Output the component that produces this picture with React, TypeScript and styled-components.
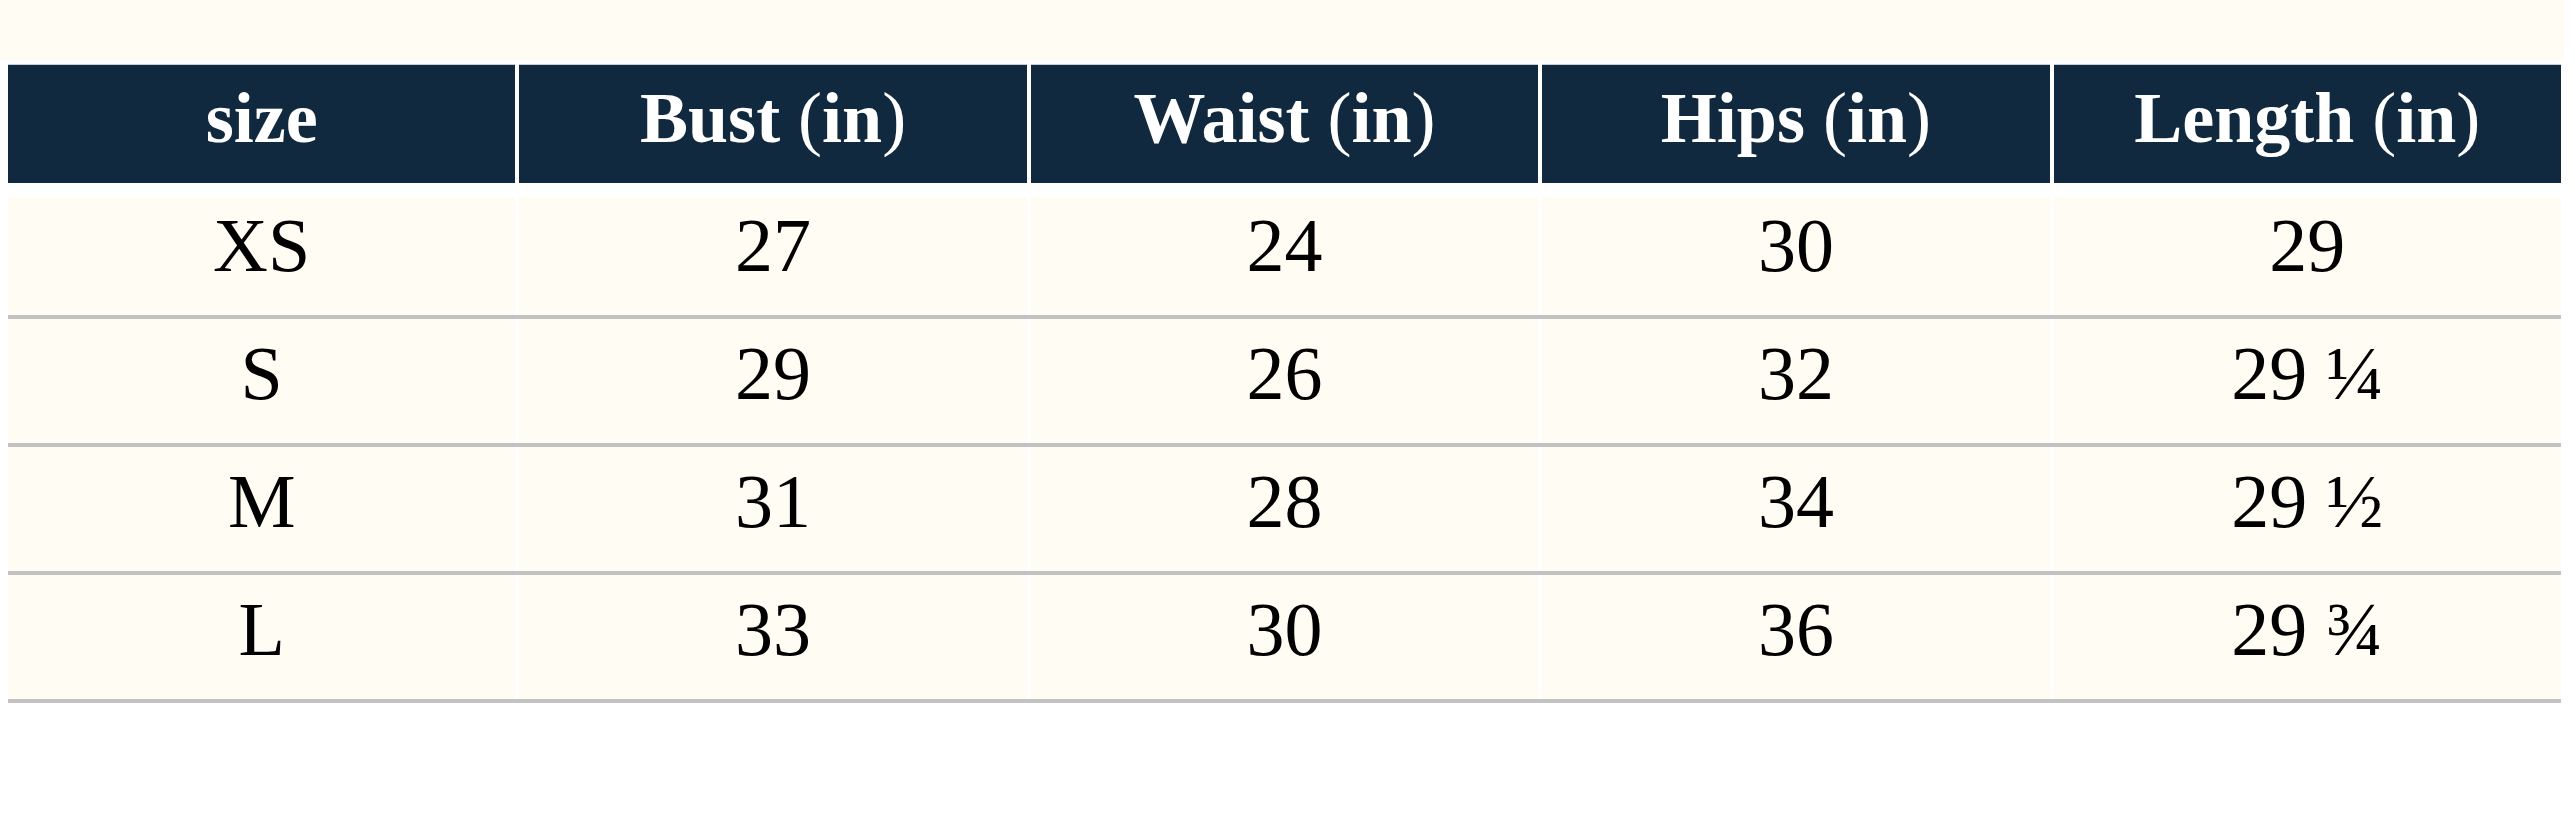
import styled, { createGlobalStyle } from 'styled-components'

const GlobalStyle = createGlobalStyle`
    html, body {
        margin: 0;
        padding: 0;
        background: #ffffff;
    }
    body {
        font-family: "Liberation Serif", "DejaVu Serif", serif;
    }
`

const cream = '#fffcf4'
const navy = '#10293f'
const rule = '#c2c2c2'

const TopBand = styled.div`
    height: 60px;
    margin-right: 11px;
    background: ${cream};
`

const Table = styled.div`
    margin: 4px 14px 0 8px;
    display: flex;
    flex-direction: column;
`

const HeadRow = styled.div`
    display: grid;
    grid-template-columns: repeat(5, 1fr);
    column-gap: 4px;
    margin-bottom: 14px;
`

const HeadCell = styled.div`
    box-sizing: border-box;
    height: 119px;
    padding-top: 17px;
    border-top: 1px solid #c9ced6;
    background: ${navy};
    color: #ffffff;
    font-size: 72px;
    line-height: 72px;
    font-weight: bold;
    text-align: center;
    white-space: nowrap;
`

const Paren = styled.span`
    font-weight: normal;
`

const BodyRow = styled.div`
    display: grid;
    grid-template-columns: repeat(5, 1fr);
    column-gap: 4px;
    border-bottom: 4px solid ${rule};
`

const BodyCell = styled.div<{ $first?: boolean }>`
    box-sizing: border-box;
    height: ${(p) => (p.$first ? 118 : 124)}px;
    padding-top: ${(p) => (p.$first ? 10 : 16)}px;
    background: ${cream};
    color: #000000;
    font-size: 76px;
    line-height: 76px;
    text-align: center;
    white-space: nowrap;
`

const headers = ['size', 'Bust', 'Waist', 'Hips', 'Length']

const rows: string[][] = [
    ['XS', '27', '24', '30', '29'],
    ['S', '29', '26', '32', '29 ¼'],
    ['M', '31', '28', '34', '29 ½'],
    ['L', '33', '30', '36', '29 ¾'],
]

const App = (): JSX.Element => {
    return (
        <>
            <GlobalStyle />
            <TopBand />
            <Table>
                <HeadRow>
                    {headers.map((h, i) => (
                        <HeadCell key={h}>
                            {h}
                            {i > 0 && <> <Paren>(</Paren>in<Paren>)</Paren></>}
                        </HeadCell>
                    ))}
                </HeadRow>
                {rows.map((row, r) => (
                    <BodyRow key={row[0]}>
                        {row.map((value, c) => (
                            <BodyCell key={c} $first={r === 0}>
                                {value}
                            </BodyCell>
                        ))}
                    </BodyRow>
                ))}
            </Table>
        </>
    )
}

export default App
